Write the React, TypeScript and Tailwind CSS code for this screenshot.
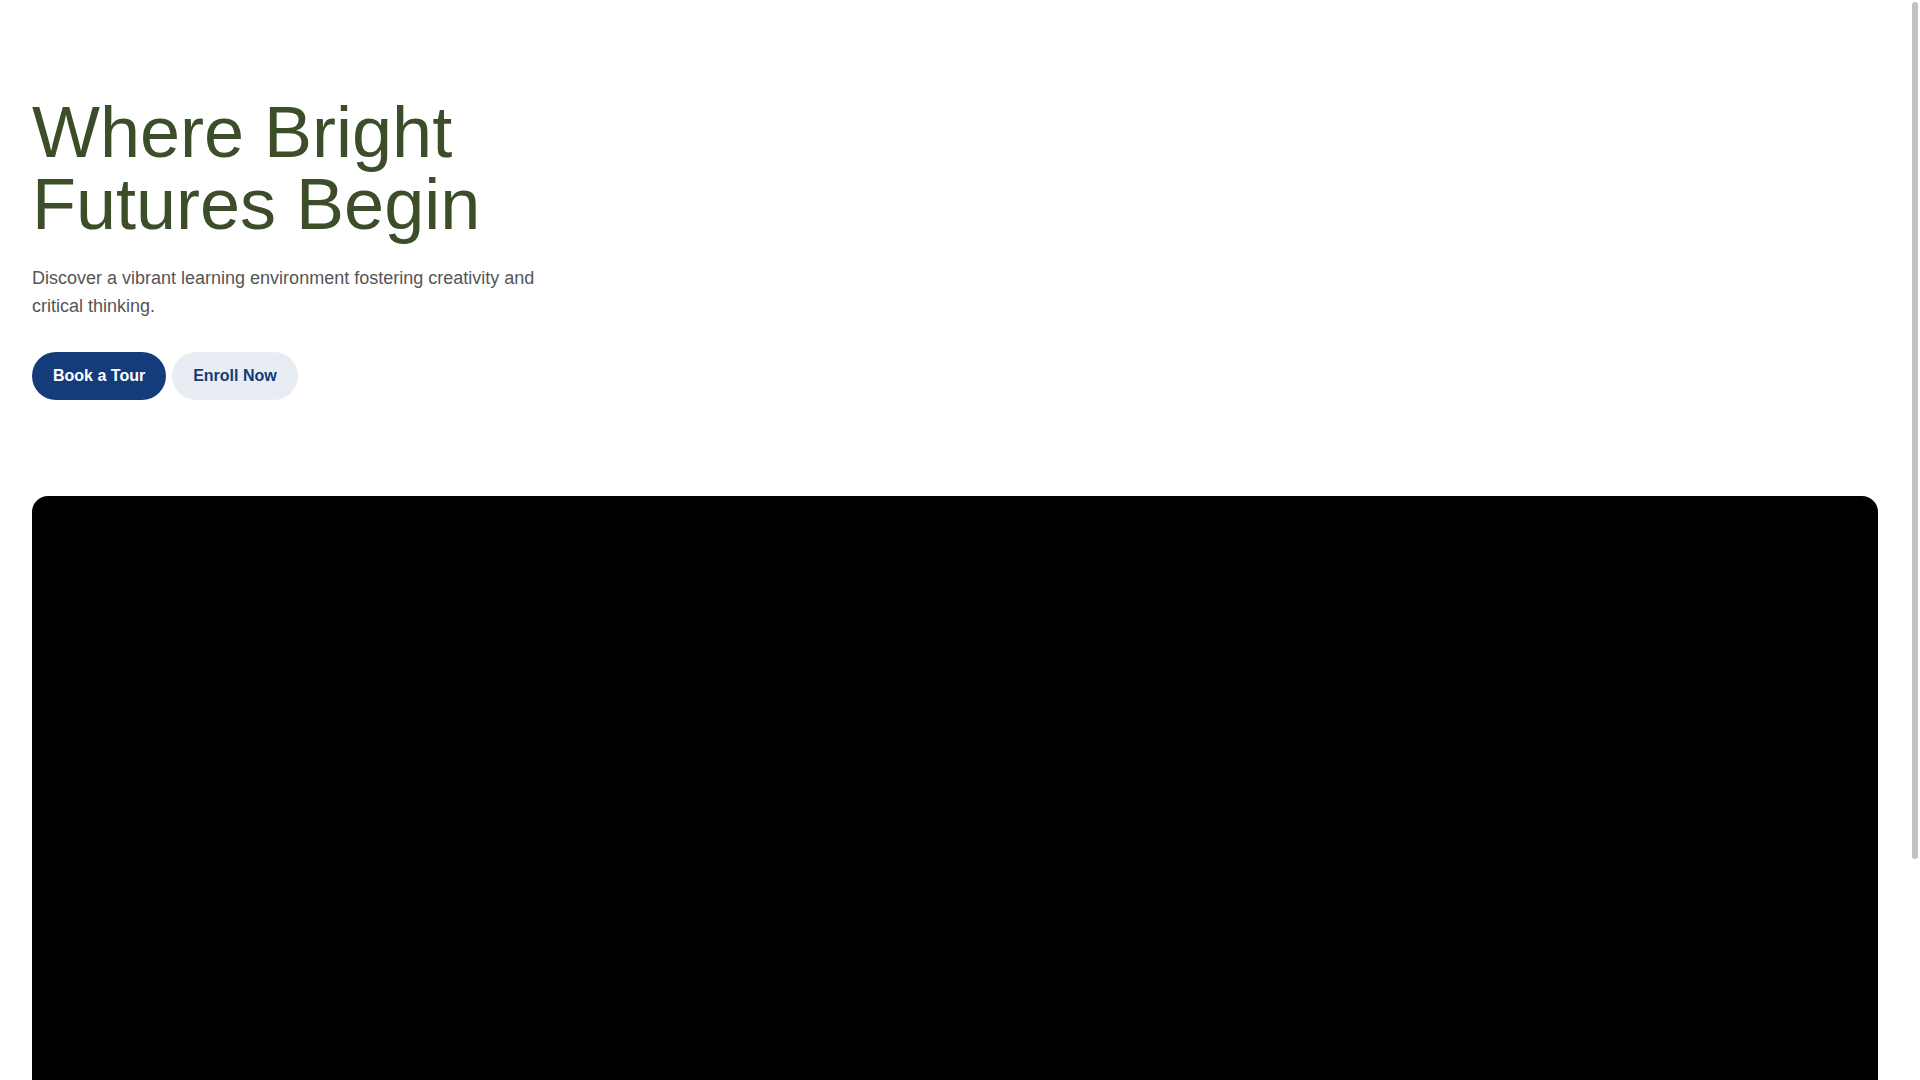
import React from "react";

export default function App() {
  return (
    <div className="relative min-h-screen bg-white pr-[10px] font-['Liberation_Sans',Arial,sans-serif]">
      <section className="px-8 py-24">
        <div className="max-w-lg">
          <h1 className="text-7xl leading-none font-normal text-[#3c4d29]">
            Where Bright Futures Begin
          </h1>
          <p className="mt-6 text-lg leading-7 text-[#555555]">
            Discover a vibrant learning environment fostering creativity and critical thinking.
          </p>
          <div className="mt-8 flex gap-1.5">
            <button className="rounded-full bg-[#143c7a] px-[21px] py-3 text-base leading-6 font-bold text-white">
              Book a Tour
            </button>
            <button className="rounded-full bg-[#e8edf4] px-[21px] py-3 text-base leading-6 font-bold text-[#143c7a]">
              Enroll Now
            </button>
          </div>
        </div>
      </section>
      <section className="px-8 pb-8">
        <div className="h-[827px] w-full rounded-2xl bg-black" />
      </section>
      <div className="fixed top-[2px] right-[2px] h-[857px] w-[6px] rounded-full bg-[#c1c1c1]" />
    </div>
  );
}
